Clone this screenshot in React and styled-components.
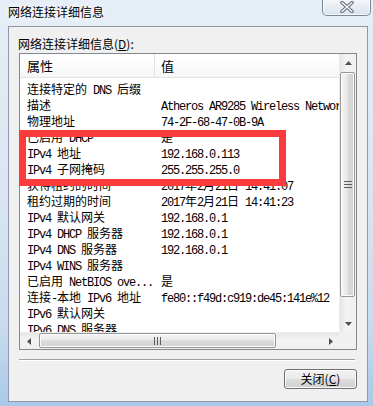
import React from 'react'
import styled, { createGlobalStyle } from 'styled-components'

const GlobalStyle = createGlobalStyle`
  html, body {
    margin: 0;
    padding: 0;
  }
  body {
    width: 373px;
    height: 406px;
    overflow: hidden;
    background: #dce7f3;
    font-family: "Noto Sans CJK SC", "Noto Sans", sans-serif;
  }
`

const Window = styled.div`
  position: relative;
  width: 373px;
  height: 406px;
  display: flex;
  flex-direction: column;
  background: linear-gradient(180deg, #e6eef7 0%, #dbe6f2 45%, #c9dbee 80%, #a9c8e8 100%);
`

const TitleBar = styled.div`
  height: 26px;
  display: flex;
  justify-content: space-between;
  align-items: flex-start;
  padding: 0 2px 0 8px;
`

const Title = styled.div`
  font-size: 12px;
  line-height: 24px;
  color: #000;
  text-shadow: 0 0 4px #fff, 0 0 8px #fff;
`

const CloseBtn = styled.div`
  width: 49px;
  height: 17px;
  margin-top: -1px;
  box-sizing: border-box;
  border: 1px solid #7d8896;
  border-top: none;
  border-radius: 0 0 5px 5px;
  background: linear-gradient(180deg, #f6f8fb 0%, #e7edf4 50%, #d9e2ec 100%);
  box-shadow: inset 0 0 0 1px rgba(255, 255, 255, 0.7);
  display: flex;
  align-items: center;
  justify-content: center;
`

const Client = styled.div`
  flex: 1;
  margin: 0 5px 4px 8px;
  border: 1px solid #8e99a7;
  background: #f0f0f0;
  padding: 9px 10px 0 10px;
  display: flex;
  flex-direction: column;
`

const GroupLabel = styled.div`
  font-size: 12px;
  line-height: 16px;
  height: 16px;
  margin-left: -1px;
  color: #000;
`

const ListBox = styled.div`
  margin-top: 1px;
  border: 1px solid #828790;
  background: #fff;
  display: grid;
  grid-template-columns: 1fr 17px;
  grid-template-rows: 278px 17px;
`

const Table = styled.div`
  overflow: hidden;
`

const Header = styled.div`
  display: flex;
  height: 23px;
  border-bottom: 1px solid #e5e5e5;
  background: linear-gradient(180deg, #ffffff 0%, #fbfbfc 60%, #f4f5f7 100%);
`

const HeaderCell = styled.div`
  box-sizing: border-box;
  width: ${p => p.$w ? `${p.$w}px` : 'auto'};
  flex: ${p => p.$w ? 'none' : '1'};
  padding-left: ${p => p.$pad}px;
  border-right: ${p => p.$w ? '1px solid #e2e3e5' : 'none'};
  font-size: 13px;
  line-height: 24px;
  color: #000;
`

const Rows = styled.div`
  padding-top: 1px;
`

const Row = styled.div`
  display: flex;
  height: 16px;
  line-height: 16px;
  white-space: nowrap;
  color: #000;
`

const PropCell = styled.div`
  box-sizing: border-box;
  width: 135px;
  flex: none;
  padding-left: 7px;
`

const ValCell = styled.div`
  padding-left: 6px;
`

const Han = styled.span`
  font-family: "Noto Sans CJK SC", sans-serif;
  font-size: 12px;
`

const Latin = styled.span`
  font-family: "Liberation Mono", monospace;
  font-size: 12px;
  letter-spacing: -1.2px;
  white-space: pre;
`

const VScroll = styled.div`
  display: flex;
  flex-direction: column;
  background: linear-gradient(90deg, #e6e6e6 0%, #f3f3f3 40%, #f0f0f0 100%);
  border-left: 1px solid #ececec;
`

const HScroll = styled.div`
  display: flex;
  background: linear-gradient(180deg, #e6e6e6 0%, #f3f3f3 40%, #f0f0f0 100%);
  border-top: 1px solid #ececec;
`

const Arrow = styled.div`
  flex: none;
  width: 17px;
  height: 17px;
  display: flex;
  align-items: center;
  justify-content: center;
`

const Track = styled.div`
  flex: 1;
  display: flex;
  flex-direction: ${p => p.$vertical ? 'column' : 'row'};
`

const Thumb = styled.div`
  box-sizing: border-box;
  border: 1px solid #979797;
  border-radius: 2px;
  display: flex;
  align-items: center;
  justify-content: center;
  ${p => p.$vertical ? `
    margin: 1px 1px 0 0;
    height: 225px;
    background: linear-gradient(90deg, #f5f5f5 0%, #e9e9e9 45%, #dadada 55%, #d2d2d2 100%);
  ` : `
    margin: 0 0 1px 2px;
    width: 237px;
    background: linear-gradient(180deg, #f5f5f5 0%, #e9e9e9 45%, #dadada 55%, #d2d2d2 100%);
  `}
  box-shadow: inset 0 0 0 1px #fbfbfb;
`

const Corner = styled.div`
  background: #f0f0f0;
`

const Separator = styled.div`
  margin: 9px 2px 0 0;
  border-top: 1px solid #a0a0a0;
  border-bottom: 1px solid #ffffff;
`

const Footer = styled.div`
  display: flex;
  justify-content: flex-end;
  margin-top: 8px;
`

const Button = styled.div`
  box-sizing: border-box;
  width: 73px;
  height: 20px;
  border: 1px solid #707070;
  border-radius: 3px;
  background: linear-gradient(180deg, #f2f2f2 0%, #ebebeb 48%, #dddddd 52%, #cfcfcf 100%);
  box-shadow: inset 0 0 0 1px #fbfbfb;
  display: flex;
  align-items: center;
  justify-content: center;
  font-size: 12px;
  line-height: 18px;
  color: #000;
`

const Highlight = styled.div`
  position: absolute;
  left: 19px;
  top: 130px;
  width: 267px;
  height: 56px;
  box-sizing: border-box;
  border: 7px solid #fc3b3c;
  pointer-events: none;
`

const HAN_SPLIT = /([\u2E80-\u9FFF\u3000-\u303F\uFF00-\uFFEF]+)/
const HAN_TEST = /^[\u2E80-\u9FFF\u3000-\u303F\uFF00-\uFFEF]/

const Mixed = ({ text }) =>
  text.split(HAN_SPLIT).filter(Boolean).map((part, i) =>
    HAN_TEST.test(part) ? <Han key={i}>{part}</Han> : <Latin key={i}>{part}</Latin>
  )

const rows = [
  ['连接特定的 DNS 后缀', ''],
  ['描述', 'Atheros AR9285 Wireless Network Adapter'],
  ['物理地址', '74-2F-68-47-0B-9A'],
  ['已启用 DHCP', '是'],
  ['IPv4 地址', '192.168.0.113'],
  ['IPv4 子网掩码', '255.255.255.0'],
  ['获得租约的时间', '2017年2月21日 14:41:07'],
  ['租约过期的时间', '2017年2月21日 14:41:23'],
  ['IPv4 默认网关', '192.168.0.1'],
  ['IPv4 DHCP 服务器', '192.168.0.1'],
  ['IPv4 DNS 服务器', '192.168.0.1'],
  ['IPv4 WINS 服务器', ''],
  ['已启用 NetBIOS ove...', '是'],
  ['连接-本地 IPv6 地址', 'fe80::f49d:c919:de45:141e%12'],
  ['IPv6 默认网关', ''],
  ['IPv6 DNS 服务器', ''],
]

const Tri = ({ dir }) => {
  const pts = {
    up: '0,4 3.5,0 7,4',
    down: '0,0 3.5,4 7,0',
    left: '4,0 0,3.5 4,7',
    right: '0,0 4,3.5 0,7',
  }[dir]
  const vertical = dir === 'up' || dir === 'down'
  return (
    <svg width={vertical ? 7 : 4} height={vertical ? 4 : 7}>
      <polygon points={pts} fill="#505050" />
    </svg>
  )
}

const Grip = ({ vertical }) => (
  <svg width={vertical ? 8 : 7} height={vertical ? 7 : 8}>
    {[0, 3, 6].map(o => vertical
      ? <line key={o} x1="0" y1={o + 0.5} x2="8" y2={o + 0.5} stroke="#5b5b5b" />
      : <line key={o} x1={o + 0.5} y1="0" x2={o + 0.5} y2="8" stroke="#5b5b5b" />
    )}
  </svg>
)

const CloseGlyph = () => (
  <svg width="16" height="12" viewBox="0 0 16 12">
    <path d="M3 1.5 L13 10.5 M13 1.5 L3 10.5" stroke="#6a6f77" strokeWidth="3.6" strokeLinecap="round" />
    <path d="M3 1.5 L13 10.5 M13 1.5 L3 10.5" stroke="#f7f8fa" strokeWidth="1.4" strokeLinecap="round" />
  </svg>
)

const App = () => {
  return (
    <Window>
      <GlobalStyle />
      <TitleBar>
        <Title>网络连接详细信息</Title>
        <CloseBtn><CloseGlyph /></CloseBtn>
      </TitleBar>
      <Client>
        <GroupLabel>网络连接详细信息(<u>D</u>):</GroupLabel>
        <ListBox>
          <Table>
            <Header>
              <HeaderCell $w={135} $pad={7}>属性</HeaderCell>
              <HeaderCell $pad={6}>值</HeaderCell>
            </Header>
            <Rows>
              {rows.map(([k, v]) => (
                <Row key={k}>
                  <PropCell><Mixed text={k} /></PropCell>
                  <ValCell><Mixed text={v} /></ValCell>
                </Row>
              ))}
            </Rows>
          </Table>
          <VScroll>
            <Arrow><Tri dir="up" /></Arrow>
            <Track $vertical>
              <Thumb $vertical><Grip vertical /></Thumb>
            </Track>
            <Arrow><Tri dir="down" /></Arrow>
          </VScroll>
          <HScroll>
            <Arrow><Tri dir="left" /></Arrow>
            <Track>
              <Thumb><Grip /></Thumb>
            </Track>
            <Arrow><Tri dir="right" /></Arrow>
          </HScroll>
          <Corner />
        </ListBox>
        <Separator />
        <Footer>
          <Button>关闭(<u>C</u>)</Button>
        </Footer>
      </Client>
      <Highlight />
    </Window>
  )
}

export default App
